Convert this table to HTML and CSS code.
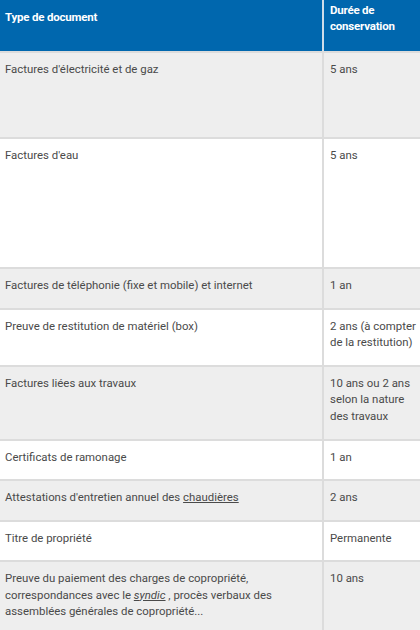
FILE: index.html
```html
<!DOCTYPE html>
<html lang="fr">
<head>
<meta charset="utf-8">
<link rel="stylesheet" href="styles.css">
</head>
<body>
<table class="docs">
  <thead>
    <tr>
      <th class="col-type">Type de document</th>
      <th class="col-dur">Durée de conservation</th>
    </tr>
  </thead>
  <tbody>
    <tr class="alt tall-1">
      <td>Factures d'électricité et de gaz</td>
      <td>5 ans</td>
    </tr>
    <tr class="tall-2">
      <td>Factures d'eau</td>
      <td>5 ans</td>
    </tr>
    <tr class="alt">
      <td>Factures de téléphonie (fixe et mobile) et internet</td>
      <td>1 an</td>
    </tr>
    <tr>
      <td>Preuve de restitution de matériel (box)</td>
      <td>2 ans (à compter de la restitution)</td>
    </tr>
    <tr class="alt tall-3">
      <td>Factures liées aux travaux</td>
      <td>10 ans ou 2 ans selon la nature des travaux</td>
    </tr>
    <tr>
      <td>Certificats de ramonage</td>
      <td>1 an</td>
    </tr>
    <tr class="alt">
      <td>Attestations d'entretien annuel des <a class="link" href="#">chaudières</a></td>
      <td>2 ans</td>
    </tr>
    <tr>
      <td>Titre de propriété</td>
      <td>Permanente</td>
    </tr>
    <tr class="alt">
      <td>Preuve du paiement des charges de copropriété, correspondances avec le <a class="link em" href="#">syndic</a>&nbsp;, procès verbaux des assemblées générales de copropriété...</td>
      <td>10 ans</td>
    </tr>
  </tbody>
</table>
</body>
</html>
```

FILE: styles.css
```css
html, body {
  margin: 0;
  padding: 0;
  background: #ffffff;
  overflow: hidden;
}

.docs {
  width: 420px;
  border-collapse: separate;
  border-spacing: 0;
  font-family: Roboto, "Liberation Sans", Arial, sans-serif;
  font-size: 11.4px;
  line-height: 16.5px;
  color: #4a4a4a;
  table-layout: fixed;
}

.docs th {
  background: #0067ae;
  color: #ffffff;
  font-weight: bold;
  font-size: 11.5px;
  letter-spacing: -0.2px;
  text-align: left;
  vertical-align: top;
  height: 51px;
  box-sizing: border-box;
  line-height: 16px;
}

.docs .col-type {
  width: 324px;
  padding: 9px 6px 0 5px;
  border-right: 2px solid #cfdde9;
}

.docs .col-dur {
  padding: 2px 4px 0 6px;
}

.docs td {
  vertical-align: top;
  border-top: 2px solid #dcdcdc;
  padding: 8px 4px 14px 5px;
}

.docs td:first-child {
  border-right: 2px solid #dcdcdc;
}

.docs td:last-child {
  padding-left: 6px;
}

.docs .alt td {
  background: #eeeeee;
}

.docs .tall-1 td {
  height: 62px;
}

.docs .tall-2 td {
  height: 106px;
}

.docs .tall-3 td {
  height: 50px;
}

.link {
  color: #4a4a4a;
  text-decoration: underline;
}

.link.em {
  font-style: italic;
}
```
